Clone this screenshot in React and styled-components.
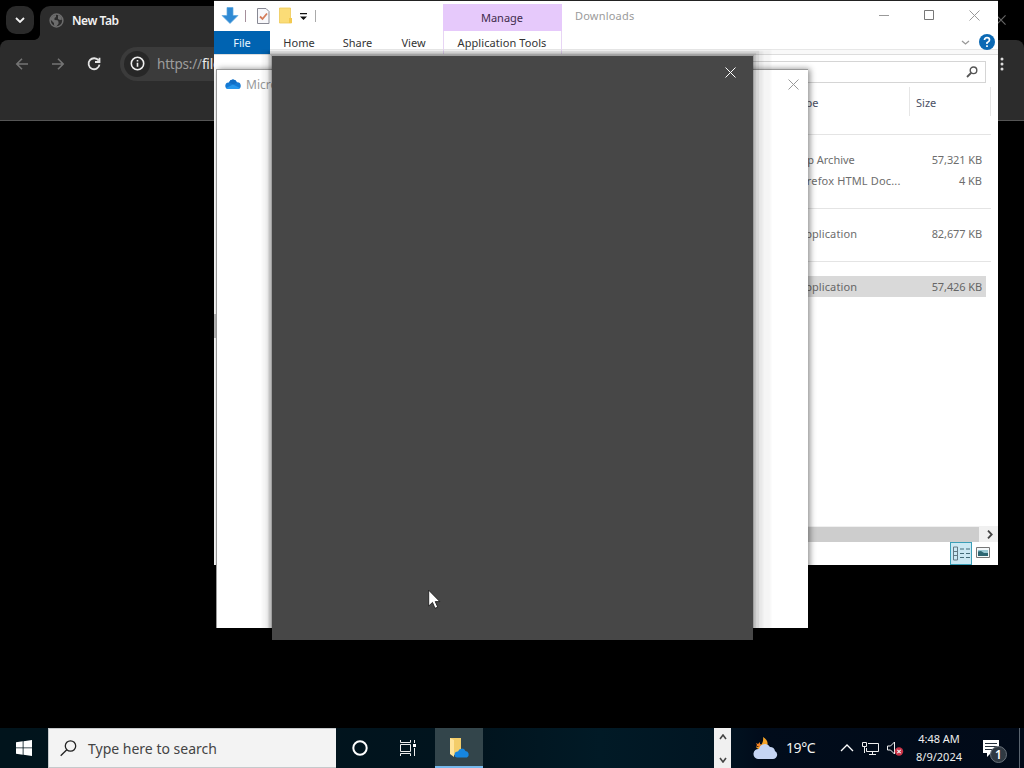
import React from "react";
import styled, { createGlobalStyle } from "styled-components";

const Global = createGlobalStyle`
  * { box-sizing: border-box; }
  html, body { margin: 0; padding: 0; background: #000; overflow: hidden; }
  body { font-family: "Noto Sans", "Open Sans", sans-serif; font-size: 11px; }
  svg { display: block; flex: none; }
`;

const Desktop = styled.main`
  position: relative;
  width: 1024px;
  height: 768px;
  overflow: hidden;
  background: #000;
`;

const Window = styled.section`
  position: absolute;
  left: ${(p) => p.$x}px;
  top: ${(p) => p.$y}px;
  width: ${(p) => p.$w}px;
  height: ${(p) => p.$h}px;
  display: flex;
  flex-direction: column;
  overflow: hidden;
`;

const Label = styled.span`
  white-space: nowrap;
  font-size: ${(p) => p.$size || 11}px;
  line-height: 16px;
  letter-spacing: ${(p) => p.$track || 0}px;
  color: ${(p) => p.$color || "#333"};
  font-weight: ${(p) => p.$weight || 400};
`;

/* Browser */
const BrowserWindow = styled(Window)`
  border-bottom: 1px solid #555;
  background: #2c2c2c;
`;
const TabStrip = styled.div`
  display: flex;
  height: 40px;
  background: #000;
  padding: 6px 0 0 6px;
`;
const TabSearch = styled.div`
  display: grid;
  place-items: center;
  flex: none;
  width: 28px;
  height: 28px;
  border-radius: 10px;
  background: #2a2a2a;
`;
const TabFlare = styled.i`
  flex: none;
  align-self: flex-end;
  width: 6px;
  height: 6px;
  background: radial-gradient(circle at 0 0, #000 5.5px, #2c2c2c 6.2px);
`;
const BrowserTab = styled.div`
  display: flex;
  flex: none;
  align-items: center;
  gap: 8px;
  width: 240px;
  height: 34px;
  padding: 0 0 5px 9px;
  border-radius: 10px 10px 0 0;
  background: #2c2c2c;
`;
const BrowserClose = styled.div`
  flex: none;
  margin: 9px 0 0 716px;
`;
const Corners = styled.div`
  display: flex;
  height: 8px;
  background: #000;
  &::before {
    content: "";
    flex: 1;
    border-radius: 8px 8px 0 0;
    background: #2c2c2c;
  }
`;
const BrowserBar = styled.div`
  display: flex;
  align-items: center;
  height: 31px;
  padding: 0 20px 0 14px;
  gap: 20px;
`;
const Address = styled.div`
  display: flex;
  align-items: center;
  flex: 1;
  gap: 7px;
  height: 34px;
  margin: 0 10px 0 -2px;
  padding-left: 4px;
  border-radius: 17px;
  background: #3b3b3b;
`;
const InfoDisc = styled.div`
  display: grid;
  place-items: center;
  width: 26px;
  height: 26px;
  border-radius: 50%;
  background: #272727;
`;
const UrlText = styled(Label)`
  b { font-weight: 400; color: #eee; }
`;

/* File explorer */
const Explorer = styled(Window)`
  background: #fff;
  border-top: 1px solid #222;
`;
const TitleBar = styled.div`
  display: flex;
  height: 30px;
`;
const QuickAccess = styled.div`
  display: flex;
  align-items: center;
  gap: 8px;
  width: 229px;
  padding: 0 0 1px 7px;
`;
const Divider = styled.i`
  width: 1px;
  height: 12px;
  margin: 0 ${(p) => p.$gap || 0}px 0 ${(p) => -(p.$gap || 0)}px;
  background: ${(p) => p.$color};
`;
const ManageTab = styled.div`
  display: grid;
  place-items: center;
  width: 119px;
  height: 27px;
  margin-top: 3px;
  padding-right: 1px;
  background: #e6c9fb;
`;
const TitleText = styled.div`
  flex: 1;
  padding: 7px 0 0 13px;
`;
const CaptionButtons = styled.div`
  display: flex;
  align-items: center;
  gap: 35px;
  height: 28px;
  padding-right: 18px;
`;
const RibbonTabs = styled.div`
  display: flex;
  height: 24px;
  border-bottom: 1px solid #ddd;
  background: linear-gradient(#fff 18px, #e7e7e7 18px, #e7e7e7 19px, #f9f9f9 19px);
`;
const RibbonTab = styled.div`
  display: grid;
  place-items: center;
  width: ${(p) => p.$w}px;
  height: 23px;
  padding: 1px ${(p) => p.$end || 0}px 0 0;
  background: ${(p) => (p.$active ? "#0063b1" : "transparent")};
  border: 0 solid #e7d5f4;
  border-width: ${(p) => (p.$context ? "0 1px" : 0)};
`;
const RibbonEnd = styled.div`
  display: flex;
  align-items: center;
  justify-content: flex-end;
  flex: 1;
  gap: 9px;
  padding: 0 3px 1px 0;
`;
const AddressRow = styled.div`
  display: flex;
  height: 29px;
  padding: 6px 12px 0 300px;
`;
const SearchBox = styled.div`
  display: flex;
  align-items: center;
  justify-content: flex-end;
  width: 100%;
  height: 22px;
  padding-right: 7px;
  border: 1px solid #d5d5d5;
`;
const Body = styled.div`
  display: flex;
  flex: 1;
`;
const NavPane = styled.nav`
  width: 184px;
  padding-top: 230px;
`;
const NavThumb = styled.div`
  width: 3px;
  height: 24px;
  background: #bdbdbd;
`;
const FileList = styled.div`
  display: flex;
  flex-direction: column;
  width: 600px;
`;
const Columns = styled.div`
  display: grid;
  grid-template-columns: 325px 81px;
  justify-content: end;
  height: 29px;
  margin: 3px 7px 0 0;
`;
const ColumnHead = styled.div`
  padding: 8px 0 0 ${(p) => p.$pad}px;
  border-right: 1px solid #e6e6e6;
`;
const FileRule = styled.hr`
  width: 593px;
  height: 1px;
  margin: ${(p) => p.$top}px 0 14px;
  border: 0;
  background: #e4e4e4;
`;
const FileRow = styled.div`
  display: flex;
  align-items: center;
  justify-content: space-between;
  height: 21px;
  margin-right: 12px;
  padding: 0 4px 0 400px;
  background: ${(p) => (p.$selected ? "#d9d9d9" : "transparent")};
`;
const ScrollBar = styled.div`
  display: flex;
  align-items: center;
  gap: 8px;
  height: 16px;
  margin-top: auto;
  background: #f0f0f0;
`;
const ScrollThumb = styled.div`
  width: 581px;
  height: 15px;
  background: #cdcdcd;
`;
const ViewModes = styled.div`
  display: flex;
  align-items: flex-start;
  justify-content: flex-end;
  gap: 4px;
  height: 23px;
  padding-right: 8px;
  > svg { margin-top: 5px; }
`;
const ViewMode = styled.div`
  display: grid;
  place-items: center;
  width: 22px;
  height: 23px;
  background: #cbe8f3;
  border: 1px solid #3b9fb8;
`;

/* Setup dialogs */
const SetupWindow = styled(Window)`
  background: #fff;
  border: 1px solid #999;
  border-width: 1px 0 0 1px;
  overflow: visible;
  box-shadow: 2px 0 6px rgba(0, 0, 0, 0.45);
`;
const SetupTitle = styled.div`
  display: flex;
  align-items: center;
  gap: 5px;
  height: 28px;
  padding: 0 9px 0 8px;
  ${Label} { padding-top: 1px; }
`;
const Spacer = styled.span`
  flex: 1;
`;
const DarkWindow = styled(Window)`
  background: #474747;
  box-shadow:
    0 0 1px 1px rgba(0, 0, 0, 0.18),
    0 0 1px 3px rgba(0, 0, 0, 0.09),
    1px 0 1px 5px rgba(0, 0, 0, 0.07),
    2px 3px 2px 8px rgba(0, 0, 0, 0.05),
    4px 8px 2px 14px rgba(0, 0, 0, 0.04);
`;
const DarkClose = styled.div`
  display: flex;
  justify-content: flex-end;
  padding: 11px 17px 0 0;
`;
const Pointer = styled.div`
  position: absolute;
  left: 428px;
  top: 589px;
`;

/* Taskbar */
const Taskbar = styled.footer`
  position: absolute;
  left: 0;
  bottom: 0;
  width: 1024px;
  height: 40px;
  display: flex;
  background: linear-gradient(90deg, #01141c 0, #01141e 480px, #011a26 600px, #011522 715px, #010c1b 760px, #010a18 100%);
`;
const TaskButton = styled.div`
  display: grid;
  place-items: center;
  width: 48px;
  height: 40px;
  margin-left: ${(p) => (p.$active ? 3 : 0)}px;
  background: ${(p) => (p.$active ? "#33454b" : "transparent")};
  border-bottom: ${(p) => (p.$active ? "2px solid #76b9ed" : "0")};
`;
const SearchInput = styled.div`
  display: flex;
  align-items: center;
  gap: 11px;
  width: 288px;
  padding: 1px 0 0 11px;
  background: #f3f3f3;
  border: 1px solid #c5c9cb;
  border-right: 0;
`;
const TaskScroll = styled.div`
  display: flex;
  flex-direction: column;
  align-items: center;
  justify-content: space-between;
  width: 17px;
  margin-left: 231px;
  padding: 6px 0 5px;
  background: #f0f0f0;
`;
const Weather = styled.div`
  display: flex;
  align-items: center;
  gap: 8px;
  width: 109px;
  padding-left: 22px;
`;
const Tray = styled.div`
  display: flex;
  align-items: center;
  gap: 8px;
  width: 67px;
`;
const Clock = styled.div`
  display: flex;
  flex-direction: column;
  align-items: center;
  width: 64px;
  padding-top: 3px;
  gap: 2px;
`;
const Notices = styled.div`
  display: flex;
  flex: 1;
  padding: 10px 0 0 11px;
`;
const ShowDesktop = styled.div`
  width: 5px;
  height: 40px;
  border-left: 1px solid #5b6570;
`;

const Cross = ({ size = 11, color = "#888", width = 1 }) => (
  <svg width={size} height={size} viewBox="0 0 11 11" stroke={color} strokeWidth={width} fill="none">
    <path d="M.5 .5 10.5 10.5M10.5 .5 .5 10.5" />
  </svg>
);

const Arrow = ({ flip }) => (
  <svg width="16" height="16" viewBox="0 0 16 16" fill="none" stroke="#747474" strokeWidth="1.6">
    <path d={flip ? "M2 8H13M8 2.8 13.2 8 8 13.2" : "M14 8H3M8 2.8 2.8 8 8 13.2"} />
  </svg>
);

const Chevron = ({ w, h, up, color, stroke = 1.3 }) => (
  <svg width={w} height={h} viewBox={`0 0 ${w} ${h}`} fill="none" stroke={color} strokeWidth={stroke}>
    <path d={up ? `M1 ${h - 1} ${w / 2} 1 ${w - 1} ${h - 1}` : `M1 1 ${w / 2} ${h - 1} ${w - 1} 1`} />
  </svg>
);

const Globe = () => (
  <svg width="15" height="15" viewBox="0 0 15 15">
    <circle cx="7.5" cy="7.5" r="6.4" fill="#2c2c2c" stroke="#6c6c6c" strokeWidth="1.5" />
    <path d="M2 5c1-2 3-3 5-3v2L5.5 5v2l3 .3 1 1.5v2l-2 2.500c-1 0-2-.4-2.500-.8V10L2 7zM9 2l3 1.500 1 3-2 .5-2-1z" fill="#6c6c6c" />
  </svg>
);

const OneDrive = ({ w, h }) => (
  <svg width={w} height={h} viewBox="0 0 16 10">
    <path d="M4 3.500A4.200 4.200 0 0 1 11.900 3.200 3.400 3.400 0 0 1 12.700 10H3.200A3.200 3.200 0 0 1 4 3.500Z" fill="#1479d3" />
    <path d="M4 3.500A4.200 4.200 0 0 1 11.900 3.200L8.500 5.500 4 3.500Z" fill="#0f6cc4" />
    <path d="M1 8.900 8 5.600 15 8.900A3.500 3.500 0 0 1 12.700 10H3.200A3.200 3.200 0 0 1 1 8.900Z" fill="#2697ed" />
  </svg>
);

function Browser() {
  return (
    <BrowserWindow $x={0} $y={0} $w={1024} $h={121}>
      <TabStrip>
        <TabSearch><Chevron w={10} h={6} color="#f2f2f2" stroke={1.8} /></TabSearch>
        <TabFlare />
        <BrowserTab>
          <Globe />
          <Label $size={12} $weight={600} $color="#f2f2f2" $track={-0.45}>New Tab</Label>
        </BrowserTab>
        <BrowserClose><Cross size={10} color="#666" width={1.3} /></BrowserClose>
      </TabStrip>
      <Corners />
      <BrowserBar>
        <Arrow />
        <Arrow flip />
        <svg width="16" height="16" viewBox="0 0 16 16" fill="none" stroke="#e5e5e5" strokeWidth="1.8">
          <path d="M12.600 4.600A5.500 5.500 0 1 0 13.500 8.700M13.500 1.700V6H9" />
        </svg>
        <Address>
          <InfoDisc>
            <svg width="15" height="15" viewBox="0 0 15 15" fill="none" stroke="#eee" strokeWidth="1.6">
              <circle cx="7.500" cy="7.500" r="6.200" /><path d="M7.500 6.700v4M7.500 4v1.500" />
            </svg>
          </InfoDisc>
          <UrlText $size={13.5} $track={-0.2} $color="#9d9d9d">https://<b>filetransfer.io</b></UrlText>
        </Address>
        <svg width="4" height="16" viewBox="0 0 4 16" fill="#ddd">
          <circle cx="2" cy="3" r="1.500" /><circle cx="2" cy="8" r="1.500" /><circle cx="2" cy="13" r="1.500" />
        </svg>
      </BrowserBar>
    </BrowserWindow>
  );
}

function FileExplorer() {
  return (
    <Explorer $x={214} $y={0} $w={784} $h={565}>
      <TitleBar>
        <QuickAccess>
          <svg width="18" height="18" viewBox="0 0 18 18">
            <path d="M6 .5h6v8h5l-8 8-8-8h5z" fill="#2f8ad4" stroke="#5da7e0" strokeWidth=".7" />
          </svg>
          <Divider $gap={2} $color="#a58f9b" />
          <svg width="14" height="16" viewBox="0 0 14 16">
            <path d="M1.500.500h8.500l3 3v12h-11.500z" fill="#f8f8fb" stroke="#888994" />
            <path d="M4 8.500 6.500 11 11 5.500" fill="none" stroke="#d47b59" strokeWidth="1.800" />
          </svg>
          <svg width="14" height="17" viewBox="0 0 14 17">
            <path d="M1.500 1h11v11h1v4h-12z" fill="#fbdc77" stroke="#edc958" strokeWidth=".8" />
            <path d="M11 11h3v5h-3z" fill="#f3c94f" />
          </svg>
          <svg width="7" height="8" viewBox="0 0 7 8"><path d="M0 1h7v1.200H0zM0 4.500h7L3.500 8z" fill="#111" /></svg>
          <Divider $color="#aaa" />
        </QuickAccess>
        <ManageTab><Label $color="#3f2b4c">Manage</Label></ManageTab>
        <TitleText><Label $track={0.2} $color="#9b9b9b">Downloads</Label></TitleText>
        <CaptionButtons>
          <svg width="10" height="11" viewBox="0 0 10 11"><path d="M0 5.500h10" stroke="#999" /></svg>
          <svg width="10" height="11" viewBox="0 0 10 11"><path d="M.5.500h9v9h-9z" fill="none" stroke="#777" /></svg>
          <Cross color="#999" />
        </CaptionButtons>
      </TitleBar>
      <RibbonTabs>
        <RibbonTab $w={56} $active><Label $color="#e8f5ff">File</Label></RibbonTab>
        <RibbonTab $w={58}><Label>Home</Label></RibbonTab>
        <RibbonTab $w={59}><Label>Share</Label></RibbonTab>
        <RibbonTab $w={56} $end={3}><Label>View</Label></RibbonTab>
        <RibbonTab $w={119} $context $end={1}><Label $track={0.08}>Application Tools</Label></RibbonTab>
        <RibbonEnd>
          <Chevron w={9} h={5} color="#999" />
          <svg width="16" height="16" viewBox="0 0 16 16">
            <circle cx="8" cy="8" r="8" fill="#0b69b4" />
            <path d="M5.500 6Q5.500 3.700 8 3.700T10.500 6Q10.500 7.300 8 8.700V10M8 11.200v1.800" fill="none" stroke="#fff" strokeWidth="1.700" />
          </svg>
        </RibbonEnd>
      </RibbonTabs>
      <AddressRow>
        <SearchBox>
          <svg width="12" height="12" viewBox="0 0 12 12" fill="none" stroke="#555" strokeWidth="1.400">
            <circle cx="7.500" cy="4.300" r="3.300" /><path d="M5 7 1 11" strokeWidth="1.800" />
          </svg>
        </SearchBox>
      </AddressRow>
      <Body>
        <NavPane><NavThumb /></NavPane>
        <FileList>
          <Columns>
            <ColumnHead $pad={209}><Label $color="#4b5065">Type</Label></ColumnHead>
            <ColumnHead $pad={6}><Label $color="#4b5065">Size</Label></ColumnHead>
          </Columns>
          <FileRule $top={18} />
          <FileRow><Label $color="#6d6d6d">Zip Archive</Label><Label $track={-0.1} $color="#6d6d6d">57,321 KB</Label></FileRow>
          <FileRow><Label $track={0.15} $color="#6d6d6d">Firefox HTML Doc...</Label><Label $color="#6d6d6d">4 KB</Label></FileRow>
          <FileRule $top={17} />
          <FileRow><Label $track={0.1} $color="#6d6d6d">Application</Label><Label $track={-0.1} $color="#6d6d6d">82,677 KB</Label></FileRow>
          <FileRule $top={17} />
          <FileRow $selected><Label $track={0.1} $color="#666">Application</Label><Label $track={-0.1} $color="#666">57,426 KB</Label></FileRow>
          <ScrollBar>
            <ScrollThumb />
            <svg width="6" height="9" viewBox="0 0 6 9" fill="none" stroke="#444" strokeWidth="1.800"><path d="M1 .7 4.700 4.500 1 8.300" /></svg>
          </ScrollBar>
          <ViewModes>
            <ViewMode>
              <svg width="17" height="15" viewBox="0 0 17 15" fill="none" stroke="#627984">
                <path d="M.5 1h4v13h-4zM.5 5.500h4M.5 9.500h4" />
                <path d="M7 3h4M13 3h4M7 7.500h4M13 7.500h4M7 11.500h4M13 11.500h4" stroke="#426b78" />
              </svg>
            </ViewMode>
            <svg width="14" height="11" viewBox="0 0 14 11">
              <path d="M.5.500h13v10H.5z" fill="#f4f8fa" stroke="#777" />
              <path d="M2 3h10v3H2z" fill="#99c8d4" /><path d="M2 4.500 5 4l3 2h4v3H2z" fill="#2e6672" />
            </svg>
          </ViewModes>
        </FileList>
      </Body>
    </Explorer>
  );
}

function WindowsTaskbar() {
  return (
    <Taskbar>
      <TaskButton>
        <svg width="16" height="16" viewBox="0 0 16 16" fill="#fff">
          <path d="M0 2.300 6.700 1.300V7.500H0zM7.500 1.200 16 0V7.500H7.500zM0 8.300H6.700V14.700L0 13.700zM7.500 8.300H16V16L7.500 14.800z" />
        </svg>
      </TaskButton>
      <SearchInput>
        <svg width="17" height="17" viewBox="0 0 17 17" fill="none" stroke="#222" strokeWidth="1.300">
          <circle cx="10.500" cy="6" r="5.200" /><path d="M6.800 9.700.700 15.800" />
        </svg>
        <Label $size={14} $color="#444">Type here to search</Label>
      </SearchInput>
      <TaskButton>
        <svg width="16" height="16" viewBox="0 0 16 16"><circle cx="8" cy="8" r="6.700" fill="none" stroke="#fff" strokeWidth="2" /></svg>
      </TaskButton>
      <TaskButton>
        <svg width="17" height="16" viewBox="0 0 17 16" fill="none" stroke="#eee">
          <path d="M.5 0v2.500h10V0M.5 4.500h10v7H.5zM.5 16v-2.500h10V16M14.500 0v3M14.500 8v8" />
          <path d="M13 4h3v3h-3z" fill="#fff" stroke="none" />
        </svg>
      </TaskButton>
      <TaskButton $active>
        <svg width="22" height="22" viewBox="0 0 22 22">
          <path d="M2 2h11v17H4l-2-2z" fill="#f3cd6a" /><path d="M2 2l4 2v17l-4-3z" fill="#ffe49b" />
          <path d="M10 15.500a4 4 0 0 1 7.500-.5A3.500 3.500 0 0 1 19 21.500H9a3 3 0 0 1 1-6Z" fill="#1686e0" />
        </svg>
      </TaskButton>
      <TaskScroll>
        <Chevron w={8} h={6} up color="#444" stroke={1.6} />
        <Chevron w={8} h={6} color="#444" stroke={1.6} />
      </TaskScroll>
      <Weather>
        <svg width="25" height="24" viewBox="0 0 25 24">
          <path d="M10 1c4 2 7 7 2 11-3 2-7 2-9-1 5 0 8-5 7-10z" fill="#f7a528" />
          <path d="M3 7l2 1 2-2v2l2 1-2 1v2l-2-2-2 1 1-2z" fill="#f58220" />
          <path d="M6 13a6 6 0 0 1 11-2 5 5 0 0 1 5 4 4.300 4.300 0 0 1-2 8H5a5 5 0 0 1 1-10Z" fill="#c5d5f3" />
        </svg>
        <Label $size={14} $track={-0.4} $color="#f2f2f2">19°C</Label>
      </Weather>
      <Tray>
        <Chevron w={14} h={8} up color="#fff" />
        <svg width="17" height="15" viewBox="0 0 17 15" fill="none" stroke="#eee">
          <path d="M6 2.500h10.500v8H4.500V7M10.500 11v3M7 13.500h7M.5 1.500h4v4h-4zM2.500 6v6" />
        </svg>
        <svg width="17" height="15" viewBox="0 0 17 15" fill="none" stroke="#eee">
          <path d="M.5 5h3L7.500 1v12l-4-4h-3z" />
          <circle cx="12" cy="10.500" r="4.200" fill="#c93448" stroke="none" /><path d="M10.300 8.800l3.400 3.400M13.700 8.800l-3.400 3.400" strokeWidth="1.200" />
        </svg>
      </Tray>
      <Clock>
        <Label $color="#eee">4:48 AM</Label>
        <Label $color="#eee">8/9/2024</Label>
      </Clock>
      <Notices>
        <svg width="26" height="26" viewBox="0 0 26 26">
          <path d="M1 2h16v13H9l-4 4v-4H1z" fill="#fff" />
          <path d="M3 5.500h12M3 8.500h12M3 11.500h8" stroke="#26313d" />
          <circle cx="16.500" cy="16.500" r="8" fill="#303942" stroke="#69717a" />
          <text x="16.500" y="21" textAnchor="middle" fill="#fff" fontSize="12" fontWeight="600">1</text>
        </svg>
      </Notices>
      <ShowDesktop />
    </Taskbar>
  );
}

export default function App() {
  return (
    <>
      <Global />
      <Desktop>
        <Browser />
        <FileExplorer />
        <SetupWindow $x={216} $y={69} $w={592} $h={559}>
          <SetupTitle>
            <OneDrive w={16} h={10} />
            <Label $size={12} $color="#999">Microsoft OneDrive</Label>
            <Spacer />
            <Cross color="#999" />
          </SetupTitle>
        </SetupWindow>
        <DarkWindow $x={272} $y={56} $w={481} $h={584}>
          <DarkClose><Cross color="#fff" /></DarkClose>
        </DarkWindow>
        <Pointer>
          <svg width="13" height="21" viewBox="0 0 13 21">
            <path d="M.7 1.200V17l3.800-3.600 2.500 5.900 2.700-1.200-2.500-5.500h4.600z" fill="#fff" stroke="#111" strokeWidth=".8" />
          </svg>
        </Pointer>
        <WindowsTaskbar />
      </Desktop>
    </>
  );
}
